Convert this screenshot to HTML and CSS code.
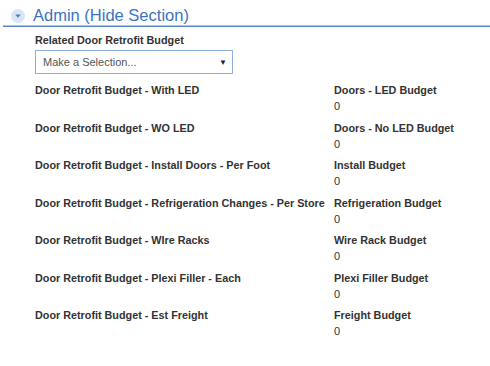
FILE: index.html
```html
<!DOCTYPE html>
<html>
<head>
<meta charset="utf-8">
<link rel="stylesheet" href="styles.css">
</head>
<body>
<div class="section">
  <div class="header">
    <span class="toggle"><svg width="14" height="14" viewBox="0 0 14 14"><circle cx="7" cy="7" r="7" fill="#dbe6f4"/><path d="M4.2 5.6 L9.8 5.6 L7 8.7 Z" fill="#4a7fc8"/></svg></span>
    <span class="title">Admin (Hide Section)</span>
  </div>
  <div class="body">
    <div class="field">
      <div class="label">Related Door Retrofit Budget</div>
      <div class="select"><span>Make a Selection...</span><span class="arrow">&#9660;</span></div>
    </div>
    <div class="grid">
      <div class="label">Door Retrofit Budget - With LED</div>
      <div><div class="label">Doors - LED Budget</div><div class="value">0</div></div>
      <div class="label">Door Retrofit Budget - WO LED</div>
      <div><div class="label">Doors - No LED Budget</div><div class="value">0</div></div>
      <div class="label">Door Retrofit Budget - Install Doors - Per Foot</div>
      <div><div class="label">Install Budget</div><div class="value">0</div></div>
      <div class="label">Door Retrofit Budget - Refrigeration Changes - Per Store</div>
      <div><div class="label">Refrigeration Budget</div><div class="value">0</div></div>
      <div class="label">Door Retrofit Budget - WIre Racks</div>
      <div><div class="label">Wire Rack Budget</div><div class="value">0</div></div>
      <div class="label">Door Retrofit Budget - Plexi Filler - Each</div>
      <div><div class="label">Plexi Filler Budget</div><div class="value">0</div></div>
      <div class="label">Door Retrofit Budget - Est Freight</div>
      <div><div class="label">Freight Budget</div><div class="value">0</div></div>
    </div>
  </div>
</div>
</body>
</html>
```
FILE: styles.css
```css
html, body {
  margin: 0;
  padding: 0;
  background: #ffffff;
}
body {
  font-family: "Liberation Sans", Arial, sans-serif;
  color: #333333;
}
.section {
  padding: 5px 0 0 3px;
}
.header {
  display: flex;
  align-items: center;
  height: 21px;
  padding-left: 8px;
  border-bottom: 1px solid #5b88c9;
  box-shadow: 0 -1px 0 #a9c4e8 inset;
}
.toggle {
  display: flex;
  width: 14px;
  height: 14px;
  margin-right: 8px;
  margin-top: 1px;
}
.title {
  font-size: 16.5px;
  color: #3b73c2;
  line-height: 21px;
}
.body {
  padding: 6px 0 0 32px;
}
.label {
  font-size: 10.8px;
  font-weight: bold;
  line-height: 15px;
  color: #333333;
  white-space: nowrap;
}
.field .label {
  margin-bottom: 2px;
}
.select {
  width: 184px;
  height: 22px;
  border: 1px solid #8cb0de;
  display: flex;
  align-items: center;
  justify-content: space-between;
  padding: 0 5px 0 7px;
  box-sizing: content-box;
  font-size: 11px;
  color: #555555;
}
.arrow {
  font-size: 8px;
  color: #222222;
}
.grid {
  display: grid;
  grid-template-columns: 299px 1fr;
  grid-auto-rows: 37.5px;
  margin-top: 9px;
}
.value {
  font-size: 11px;
  line-height: 15px;
  margin-top: 1px;
}
```
